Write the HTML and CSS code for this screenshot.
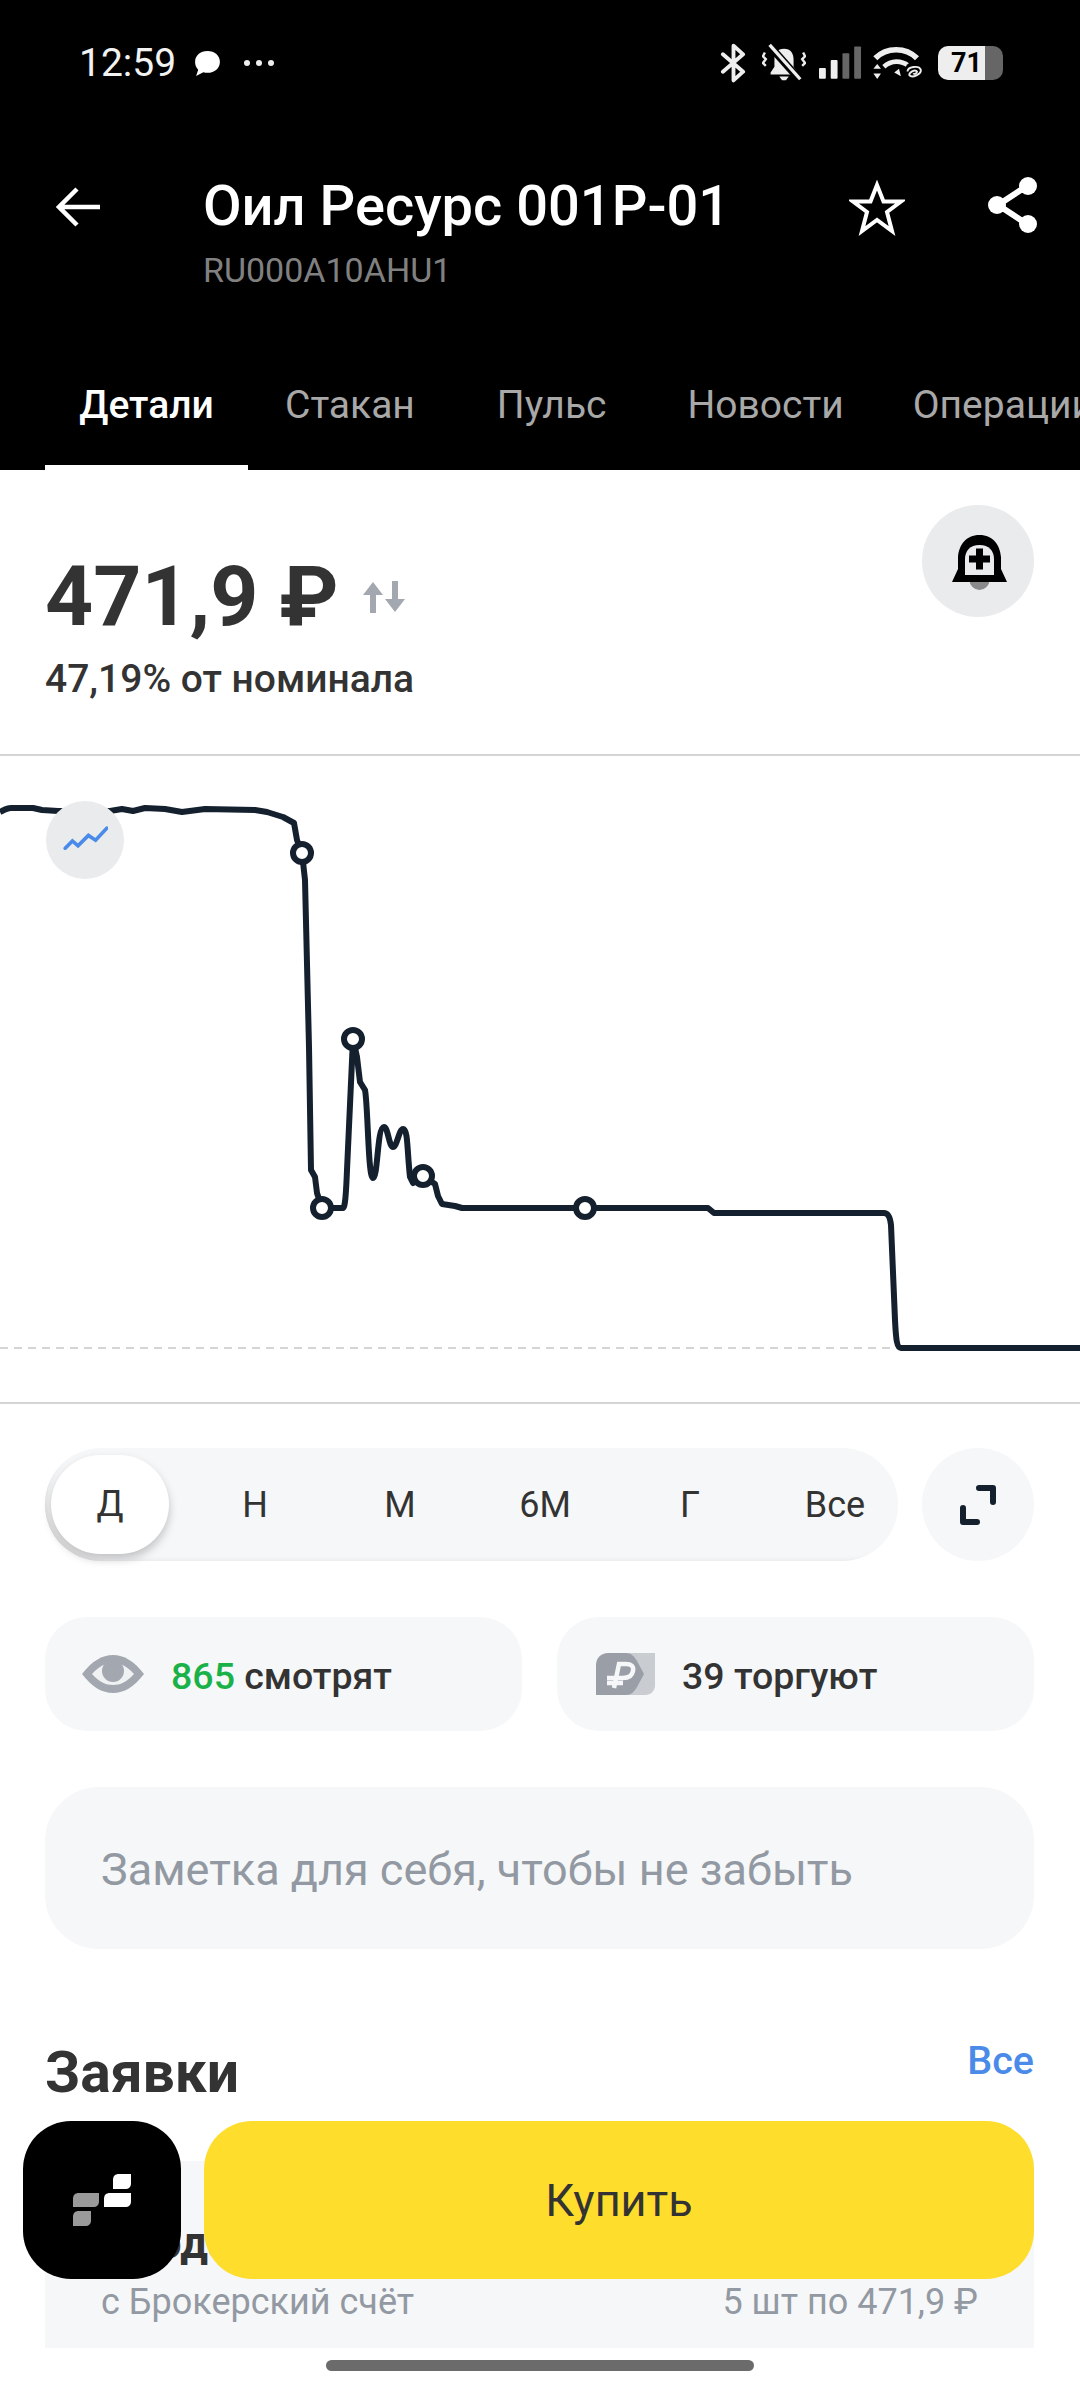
FILE: index.html
```html
<!DOCTYPE html>
<html lang="ru">
<head>
  <meta charset="UTF-8">
  <meta name="viewport" content="width=device-width, initial-scale=1.0">
  <title>Оил Ресурс 001P-01</title>
  <link rel="stylesheet" href="styles.css">
</head>
<body>
  <div class="tela">
    <div class="topo">
      <div class="status">
        <div class="status-esq">
          <span class="hora">12:59</span>
          <svg class="ic-msg" viewBox="0 0 30 30"><path d="M15 3c7 0 12 4.500 12 10.500S22 24 15 24c-1.500 0-2.500 0-4-.5L4 27l2-6c-2-2-3-4.500-3-7.500C3 7.500 8 3 15 3z" fill="#fff"/></svg>
          <span class="pontos"><i></i><i></i><i></i></span>
        </div>
        <div class="status-dir">
          <svg class="ic-bt" viewBox="0 0 28 40"><path d="M3 11l21 18-10 9V2l10 9L3 29" fill="none" stroke="#eee" stroke-width="4" stroke-linejoin="round" stroke-linecap="round"/></svg>
          <svg class="ic-mudo" viewBox="0 0 46 40"><path d="M23 5c-7 0-10 5-10 11v8l-4 6v2h28v-2l-4-6v-8c0-6-3-11-10-11z" fill="#eee"/><path d="M18 34h10l-3 4h-4z" fill="#eee"/><path d="M7 1l32 36" stroke="#000" stroke-width="8"/><path d="M8 1l32 36" stroke="#eee" stroke-width="3.500"/><path d="M3 9l-2 4 3 3-3 4 3 3M43 9l2 4-3 3 3 4-3 3" fill="none" stroke="#eee" stroke-width="2.500"/></svg>
          <svg class="ic-sinal" viewBox="0 0 44 34"><rect x="0" y="22" width="7" height="11" rx="1" fill="#eee"/><rect x="12" y="14" width="7" height="19" rx="1" fill="#eee"/><rect x="24" y="7" width="7" height="26" rx="1" fill="#666"/><rect x="36" y="0" width="7" height="33" rx="1" fill="#666"/></svg>
          <svg class="ic-wifi" viewBox="0 0 54 38"><path d="M2 14c12-12 32-12 44 0" fill="none" stroke="#eee" stroke-width="6"/><path d="M11 23c8-7 18-7 26-1" fill="none" stroke="#eee" stroke-width="5"/><path d="M22 29l5-4 2 8z" fill="#eee"/><path d="M4 20l4 5H0zM4 36l4-6H0z" fill="#eee"/><circle cx="42" cy="27" r="9" fill="#000"/><path d="M36 28c0-5 12-7 14-2 1 5-9 9-12 6-1-3 6-7 8-4 0 2-3 3-4 2" fill="none" stroke="#eee" stroke-width="2"/></svg>
          <div class="bateria">
            <span class="bat-num">71</span>
          </div>
        </div>
      </div>

      <div class="barra">
        <svg class="ic-voltar" viewBox="0 0 46 46"><path d="M44 23H4M21 5L3 23l18 18" fill="none" stroke="#fff" stroke-width="4.500"/></svg>
        <div class="titulos">
          <h1>Оил Ресурс 001P-01</h1>
          <p>RU000A10AHU1</p>
        </div>
        <svg class="ic-estrela" viewBox="0 0 56 56"><path d="M28 5l6.500 16.500H52L38 32l5 19-15-11-15 11 5-19L4 21.500h17.500z" fill="none" stroke="#fff" stroke-width="4"/></svg>
        <svg class="ic-share" viewBox="0 0 54 58"><path d="M41 10L12 29l29 19" fill="none" stroke="#fff" stroke-width="6"/><circle cx="42" cy="10" r="9" fill="#fff"/><circle cx="11" cy="29" r="9" fill="#fff"/><circle cx="42" cy="48" r="9" fill="#fff"/></svg>
      </div>

      <div class="abas">
        <div class="aba ativa">Детали</div>
        <div class="aba a2">Стакан</div>
        <div class="aba a3">Пульс</div>
        <div class="aba a4">Новости</div>
        <div class="aba a5">Операции</div>
      </div>
    </div>

    <div class="preco">
      <div>
        <div class="preco-linha">
          <span class="valor">471,9 ₽</span>
          <svg class="ic-setas" viewBox="0 0 46 36"><path d="M12 3L2 16h7v18h6V16h7z" fill="#a3a8b0"/><path d="M34 33L24 20h7V2h6v18h7z" fill="#a3a8b0"/></svg>
        </div>
        <p class="nominal">47,19% от номинала</p>
      </div>
      <div class="circulo sino">
        <svg viewBox="0 0 56 56"><circle cx="27.500" cy="45" r="10" fill="#8a8a8a"/><path d="M27.500 0C14 0 7 10 6 22v12L0 47h55l-6-13V22C48 10 41 0 27.500 0z" fill="#000"/><path d="M27.500 10C18 10 13 16 13 24v16h29V24c0-8-5-14-14.500-14z" fill="#e9ebec"/><path d="M27.500 13.500v21M17 24h21" stroke="#000" stroke-width="7"/></svg>
      </div>
    </div>

    <div class="grafico">
      <svg class="linha" viewBox="0 756 1080 646">
        <line x1="0" y1="1348" x2="896" y2="1348" stroke="#c8c8c8" stroke-width="1.500" stroke-dasharray="8 6"/>
        <path d="M0 812C4 810 7 808 11 808L33 808 42 810 58 811 110 811 122 809 133 811 145 808 165 809 182 812 205 809 255 810 267 812 283 817 294 823 297 840 302 853 305 880 309 1047 311 1170 315 1177 317 1193 322 1208 343 1208C345 1208 346 1195 347 1170L353 1039 357 1057 360 1082 365 1090C368 1105 368 1178 373 1178 378 1178 377 1127 384 1127 388 1127 389 1147 393 1147 397 1147 399 1129 403 1129 408 1129 407 1150 410 1177L413 1183 423 1176 435 1184 438 1196 442 1204 455 1206 462 1208 708 1208 714 1213 884 1213C888 1213 890 1216 891 1225L895 1320C896 1340 897 1348 901 1348L1080 1348" fill="none" stroke="#14202e" stroke-width="6" stroke-linejoin="round"/>
        <circle class="ponto" cx="302" cy="853" r="9"/>
        <circle class="ponto" cx="322" cy="1208" r="9"/>
        <circle class="ponto" cx="353" cy="1039" r="9"/>
        <circle class="ponto" cx="423" cy="1176" r="9"/>
        <circle class="ponto" cx="585" cy="1208" r="9"/>
      </svg>
      <div class="circulo tipo-grafico">
        <svg viewBox="0 0 46 30"><path d="M2 27l9-9 7 6 13-13 9 6 14-15" transform="scale(.8) translate(2 2)" fill="none" stroke="#4a8ae8" stroke-width="4.500" stroke-linecap="round"/></svg>
      </div>
    </div>

    <div class="periodos">
      <div class="periodo-lista">
        <span class="per sel">Д</span>
        <span class="per">Н</span>
        <span class="per">М</span>
        <span class="per">6М</span>
        <span class="per">Г</span>
        <span class="per">Все</span>
      </div>
      <div class="circulo expandir">
        <svg viewBox="0 0 40 40"><path d="M21 3h14v14M19 37H5V23" fill="none" stroke="#14202e" stroke-width="6" stroke-linejoin="round" stroke-linecap="round"/></svg>
      </div>
    </div>

    <div class="chips">
      <div class="chip">
        <svg class="ic-olho" viewBox="0 0 62 38"><path d="M0 19C10 6 20 0 31 0s21 6 31 19C52 32 42 38 31 38S10 32 0 19z" fill="#a3a8b0"/><path d="M10 19C17 11 24 8 31 8s14 3 21 11c-7 8-14 11-21 11S17 27 10 19z" fill="#f0f1f3"/><circle cx="31" cy="16" r="11" fill="#a3a8b0"/></svg>
        <span><b class="verde">865</b> смотрят</span>
      </div>
      <div class="chip">
        <svg class="ic-rub" viewBox="0 0 59 42"><path d="M20 0h39v32c0 6-4 10-10 10H24z" fill="#c9ccd1"/><path d="M12 0h18c5 0 8 3 11 8l7 13-7 13c-3 5-6 8-11 8H0V12C0 5 5 0 12 0z" fill="#9a9ea6"/><path d="M18 35l5-24h7c5 0 8 2 7 7s-5 7-10 7H11M11 30h16" fill="none" stroke="#f6f7f8" stroke-width="4.500"/></svg>
        <span>39 торгуют</span>
      </div>
    </div>

    <div class="nota">Заметка для себя, чтобы не забыть</div>

    <div class="zayavki-topo">
      <h2>Заявки</h2>
      <a class="todos">Все</a>
    </div>

    <div class="cartao">
      <div class="cartao-tit">Продажа</div>
      <div class="cartao-sub">
        <span>с Брокерский счёт</span>
        <span>5 шт по 471,9 ₽</span>
      </div>
    </div>

    <div class="flutuante">
      <div class="logo">
        <svg viewBox="0 0 58 52"><path d="M6 19h20v8c0 4-2 6-6 6H0v-8c0-4 2-6 6-6zM6 37h12v9c0 4-2 6-6 6H0v-9c0-4 2-6 6-6z" fill="#9a9a9a"/><path d="M46 0h12v9c0 4-2 6-6 6H40V6c0-4 2-6 6-6zM37 19h21v8c0 4-2 6-6 6H31v-8c0-4 2-6 6-6z" fill="#fff"/></svg>
      </div>
      <div class="comprar">Купить</div>
    </div>

    <div class="home"></div>
  </div>
</body>
</html>
```

FILE: styles.css
```css
* {
  box-sizing: border-box;
}
html, body {
  margin: 0;
  padding: 0;
}
body {
  font-family: 'Roboto', 'Liberation Sans', sans-serif;
  background: white;
  color: #333333;
}
svg {
  display: block;
  flex: none;
}
.tela {
  position: relative;
  width: 1080px;
  height: 2392px;
  overflow: hidden;
  background: white;
}

/* topo preto */
.topo {
  background: black;
  height: 470px;
  color: white;
}
.status {
  height: 126px;
  padding: 43px 77px 0 79px;
  display: flex;
  justify-content: space-between;
}
.status-esq {
  display: flex;
  align-items: center;
  height: 40px;
}
.hora {
  font-size: 39px;
  color: #f2f2f2;
}
.ic-msg {
  width: 31px;
  height: 31px;
  margin-left: 16px;
}
.pontos {
  display: flex;
  gap: 6px;
  margin-left: 21px;
}
.pontos i {
  width: 6px;
  height: 6px;
  border-radius: 50%;
  background: #eeeeee;
}
.status-dir {
  display: flex;
  align-items: center;
  height: 40px;
}
.ic-bt {
  width: 27px;
  height: 40px;
}
.ic-mudo {
  width: 44px;
  height: 40px;
  margin-left: 15px;
}
.ic-sinal {
  width: 43px;
  height: 34px;
  margin-left: 13px;
}
.ic-wifi {
  width: 52px;
  height: 36px;
  margin-left: 11px;
}
.bateria {
  width: 65px;
  height: 34px;
  margin-left: 13px;
  padding-right: 21px;
  border-radius: 10px 10px 10px 10px;
  background: linear-gradient(90deg, #eeeeee 0, #eeeeee 72%, #666666 72%, #666666 100%);
  display: flex;
  align-items: center;
  justify-content: flex-end;
}
.bat-num {
  color: black;
  font-size: 27px;
  font-weight: 700;
}

.barra {
  height: 196px;
  display: flex;
  align-items: flex-start;
  padding-left: 56px;
}
.ic-voltar {
  width: 46px;
  height: 46px;
  margin-top: 58px;
}
.titulos {
  margin-left: 101px;
  width: 646px;
  padding-top: 46px;
}
.titulos h1 {
  margin: 0;
  font-size: 56px;
  line-height: 68px;
  font-weight: 500;
  white-space: nowrap;
}
.titulos p {
  margin: 10px 0 0;
  font-size: 34px;
  line-height: 40px;
  color: #808080;
}
.ic-estrela {
  width: 56px;
  height: 56px;
  margin-top: 54px;
}
.ic-share {
  width: 54px;
  height: 58px;
  margin-top: 50px;
  margin-left: 81px;
}

.abas {
  height: 148px;
  display: flex;
  white-space: nowrap;
  padding-left: 45px;
  font-size: 39px;
  color: #a8a8a8;
}
.aba {
  padding-top: 60px;
  flex: none;
}
.aba.ativa {
  width: 203px;
  height: 148px;
  text-align: center;
  color: white;
  font-weight: 500;
  border-bottom: 5px solid white;
}
.a2 {
  margin-left: 37px;
}
.a3 {
  margin-left: 82px;
}
.a4 {
  margin-left: 81px;
}
.a5 {
  margin-left: 69px;
}

/* preco */
.preco {
  height: 286px;
  border-bottom: 2px solid #d4d4d4;
  padding: 35px 46px 0 45px;
  display: flex;
  justify-content: space-between;
  align-items: flex-start;
}
.preco-linha {
  display: flex;
  align-items: center;
  margin-top: 42px;
}
.valor {
  font-size: 84px;
  line-height: 100px;
  font-weight: 700;
}
.ic-setas {
  width: 46px;
  height: 36px;
  margin-left: 22px;
}
.nominal {
  margin: 10px 0 0;
  font-size: 39px;
  line-height: 44px;
  font-weight: 500;
}
.circulo {
  width: 112px;
  height: 112px;
  border-radius: 50%;
  background: #e9ebec;
  display: flex;
  align-items: center;
  justify-content: center;
}
.sino svg {
  width: 56px;
  height: 56px;
  margin: 4px 0 0 3px;
}

/* grafico */
.grafico {
  position: relative;
  height: 648px;
  border-bottom: 2px solid #d4d4d4;
}
.linha {
  width: 1080px;
  height: 646px;
}
.ponto {
  fill: white;
  stroke: #14202e;
  stroke-width: 6;
}
.tipo-grafico {
  position: absolute;
  left: 46px;
  top: 45px;
  width: 78px;
  height: 78px;
}
.tipo-grafico svg {
  width: 46px;
  height: 30px;
}

.periodos {
  display: flex;
  justify-content: space-between;
  padding: 44px 46px 0 45px;
}
.periodo-lista {
  width: 853px;
  height: 113px;
  border-radius: 56px;
  background: #f6f7f8;
  box-shadow: inset 6px -4px 6px -6px #cccccc;
  padding: 0 4px 0 6px;
  display: flex;
  align-items: center;
  justify-content: space-between;
  font-size: 36px;
  color: #333333;
}
.per {
  width: 118px;
  text-align: center;
  flex: none;
}
.per.sel {
  height: 99px;
  line-height: 99px;
  border-radius: 50px;
  background: white;
  box-shadow: 0 5px 10px rgba(0,0,0,0.22);
}
.expandir {
  height: 113px;
  background: #f6f7f8;
}
.expandir svg {
  width: 40px;
  height: 40px;
}

.chips {
  display: flex;
  justify-content: space-between;
  padding: 56px 46px 0 45px;
}
.chip {
  width: 477px;
  height: 114px;
  border-radius: 42px;
  background: #f6f7f8;
  display: flex;
  align-items: center;
  padding: 4px 0 0 37px;
  font-size: 37.5px;
  font-weight: 500;
  color: #333333;
}
.chip + .chip {
  padding-left: 39px;
}
.verde {
  font-weight: 500;
  color: #1ab248;
}
.ic-olho {
  width: 62px;
  height: 38px;
  margin: -4px 27px 0 0;
}
.ic-rub {
  width: 59px;
  height: 42px;
  margin: -4px 27px 0 0;
}

.nota {
  margin: 56px 46px 0 45px;
  height: 162px;
  border-radius: 54px;
  background: #f6f7f8;
  display: flex;
  align-items: center;
  padding: 2px 0 0 56px;
  font-size: 45px;
  color: #9299a2;
}

.zayavki-topo {
  display: flex;
  justify-content: space-between;
  align-items: flex-start;
  padding: 90px 46px 0 45px;
  height: 212px;
}
h2 {
  margin: 0;
  font-size: 57px;
  line-height: 68px;
  font-weight: 700;
}
.todos {
  font-size: 39.5px;
  line-height: 44px;
  font-weight: 500;
  color: #4a8ae8;
}

.cartao {
  margin: 0 46px 0 45px;
  height: 187px;
  background: #f6f7f8;
  padding: 58px 56px 0;
}
.cartao-tit {
  font-size: 44px;
  line-height: 48px;
  font-weight: 700;
}
.cartao-sub {
  display: flex;
  justify-content: space-between;
  margin-top: 14px;
  font-size: 36px;
  line-height: 42px;
  color: #9299a2;
}

/* botoes por cima da lista */
.flutuante {
  position: absolute;
  left: 23px;
  top: 2121px;
  right: 46px;
  display: flex;
  gap: 23px;
}
.logo {
  width: 158px;
  height: 158px;
  border-radius: 48px;
  background: black;
  display: flex;
  align-items: center;
  justify-content: center;
}
.logo svg {
  width: 58px;
  height: 52px;
}
.comprar {
  flex: 1;
  height: 158px;
  border-radius: 48px;
  background: #ffdd2d;
  display: flex;
  align-items: center;
  justify-content: center;
  font-size: 45px;
  color: #333333;
}
.home {
  position: absolute;
  left: 326px;
  top: 2360px;
  width: 428px;
  height: 11px;
  border-radius: 6px;
  background: #6b6b6b;
}
```
